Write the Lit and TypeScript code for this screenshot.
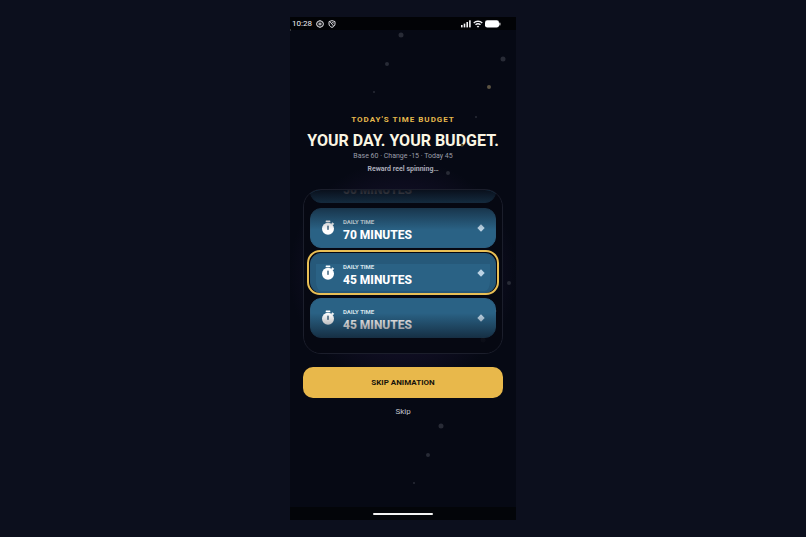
import { LitElement, html, css } from "lit";
import { customElement, property, state } from "lit/decorators.js";
import { styleMap } from "lit/directives/style-map.js";
import { classMap } from "lit/directives/class-map.js";

interface Particle {
  x: number;
  y: number;
  size: number;
  color: string;
}

const grey = "#282b36";
const faint = "#ffffff10";

/* Positions are percentages of the screen area. */
const particles: Particle[] = [
  { x: 0, y: 2.6, size: 2, color: "#4a4a4c" },
  { x: 49, y: 3.6, size: 5, color: grey },
  { x: 43, y: 9.3, size: 4, color: grey },
  { x: 37, y: 14.9, size: 2, color: grey },
  { x: 94.2, y: 8.3, size: 5, color: grey },
  { x: 88.1, y: 14, size: 4, color: "#5c5342" },
  { x: 82.1, y: 19.8, size: 2, color: grey },
  { x: 76, y: 25.4, size: 3, color: "#5c4a22" },
  { x: 70, y: 31.1, size: 4, color: grey },
  { x: 97.1, y: 52.9, size: 4, color: grey },
  { x: 91.2, y: 58.5, size: 2, color: faint },
  { x: 85.2, y: 64.2, size: 5, color: faint },
  { x: 67, y: 81.4, size: 5, color: grey },
  { x: 61, y: 87, size: 4, color: grey },
  { x: 55, y: 92.7, size: 2, color: grey },
];

@customElement("status-bar")
class StatusBar extends LitElement {
  static styles = css`
    :host {
      display: flex;
      align-items: center;
      justify-content: space-between;
      height: 13px;
      padding: 0 15px 0 2px;
      background: #020306;
      color: #f2f2f4;
      font-size: 8px;
      line-height: 13px;
    }
    .group {
      display: flex;
      align-items: center;
      gap: 4px;
    }
    .signals {
      gap: 2px;
    }
    svg {
      display: block;
    }
  `;

  render() {
    return html`
      <div class="group">
        <span>10:28</span>
        <svg width="8" height="8" viewBox="0 0 16 16" fill="none" stroke="#e4e4e8" stroke-width="2">
          <path d="M8 1.2 13.4 3.6 14.8 8 13.4 12.4 8 14.8 2.6 12.4 1.2 8 2.6 3.6Z" />
          <circle cx="8" cy="8" r="1.8" />
          <path d="M8 2v3M8 11v3M3 5l2.6 1.6M13 5l-2.6 1.6M3 11l2.6-1.6M13 11l-2.6-1.6" stroke-width="1" />
        </svg>
        <svg width="8" height="8" viewBox="0 0 16 16" fill="none" stroke="#e4e4e8" stroke-width="1.9">
          <path d="M8 1.2 14 3.2V8c0 3.4-2.6 5.6-6 6.8C4.6 13.6 2 11.4 2 8V3.2Z" />
          <path d="M4.500 4 11 12" />
          <path d="M8 5h2.500v2.500" stroke-width="1.400" />
        </svg>
      </div>
      <div class="group signals">
        <svg width="10" height="8" viewBox="0 0 10 8" fill="#f4f4f6">
          <rect x="0" y="5" width="1.6" height="2.4" />
          <rect x="2.7" y="3.6" width="1.6" height="3.8" />
          <rect x="5.4" y="2" width="1.6" height="5.4" />
          <rect x="8.1" y="0.3" width="1.6" height="7.1" />
        </svg>
        <svg width="10" height="8" viewBox="0 0 20 16" fill="none" stroke="#f4f4f6" stroke-width="2.8">
          <path d="M1.5 6a12.4 12.4 0 0 1 17 0" />
          <path d="M5 9.6a7.4 7.4 0 0 1 10 0" />
          <path d="M10 15.4 7.4 12.6a4 4 0 0 1 5.2 0Z" fill="#f4f4f6" stroke="none" />
        </svg>
        <svg width="16" height="8" viewBox="0 0 16 8" fill="#fff">
          <rect x="0" y="0.3" width="14" height="7.2" rx="2.3" />
          <rect x="14.3" y="2.5" width="1.1" height="3" rx="0.5" />
        </svg>
      </div>
    `;
  }
}

@customElement("reel-card")
class ReelCard extends LitElement {
  @property({ type: Number }) minutes = 0;

  static styles = css`
    :host {
      display: flex;
      align-items: center;
      gap: 8px;
      height: 40px;
      padding: 0 10px;
      box-sizing: border-box;
      border: 1px solid #2d5f80;
      border-radius: 11px;
      background: #2a6285;
      color: #fff;
    }
    .text {
      flex: 1;
      padding-top: 5px;
    }
    .label {
      font-size: 6px;
      font-weight: 700;
      line-height: 8px;
      color: #d5e2ea;
    }
    .value {
      font-size: 12px;
      font-weight: 800;
      line-height: 18px;
    }
    svg {
      display: block;
    }
  `;

  render() {
    return html`
      <svg width="14" height="16" viewBox="0 0 14 16">
        <rect x="4.7" y="0.6" width="4.6" height="1.7" rx="0.3" fill="#fff" />
        <circle cx="7" cy="8.700" r="6" fill="#fff" />
        <path d="m10.600 3.700 1-0.900 1.100 1.100-1 1Z" fill="#fff" stroke="#fff" stroke-width="0.800" />
        <rect x="6.3" y="5.500" width="1.4" height="4.400" rx="0.600" fill="#315a78" />
      </svg>
      <div class="text">
        <div class="label">DAILY TIME</div>
        <div class="value">${this.minutes} MINUTES</div>
      </div>
      <svg width="8" height="8" viewBox="0 0 8 8">
        <path d="M4 0.300 7.700 4 4 7.700 0.300 4Z" fill="#bcd3e4" />
      </svg>
    `;
  }
}

@customElement("app-root")
class AppRoot extends LitElement {
  @state() private reel = [50, 70, 45, 45];
  @state() private selected = 2;

  static styles = css`
    :host {
      display: flex;
      justify-content: center;
      box-sizing: border-box;
      min-height: 100vh;
      padding: 17px 0;
      background: #0c0f1d;
      font-family: Roboto, "Liberation Sans", sans-serif;
    }
    .phone {
      position: relative;
      display: flex;
      flex-direction: column;
      width: clamp(226px, 28vw, 420px);
      background: #060914;
      overflow: hidden;
    }
    .particle {
      position: absolute;
      border-radius: 50%;
      transform: translate(-50%, -50%);
      pointer-events: none;
    }
    main {
      flex: 1;
      display: flex;
      flex-direction: column;
      justify-content: center;
      padding: 0 13px;
      text-align: center;
      background: radial-gradient(circle 114px at 50% 51%, #120f26 0%, #120f26 60%, #060914 100%);
    }
    .eyebrow {
      margin: 0;
      font-size: 8px;
      font-weight: 700;
      line-height: 10px;
      letter-spacing: 1px;
      color: #e5b94d;
    }
    h1 {
      margin: 6px 0 0;
      font-size: 16px;
      font-weight: 700;
      line-height: 20px;
      color: #fbf6e3;
      white-space: nowrap;
    }
    .summary {
      margin: 0;
      font-size: 7px;
      line-height: 10px;
      color: #9a9da9;
    }
    .progress {
      margin: 3px 0 15px;
      font-size: 7px;
      font-weight: 700;
      line-height: 10px;
      color: #a9abb8;
    }
    .reel {
      position: relative;
      display: flex;
      flex-direction: column;
      justify-content: flex-end;
      gap: 5px;
      height: 165px;
      padding: 0 6px 15px;
      box-sizing: border-box;
      border: 1px solid #1b1e2b;
      border-radius: 18px;
      background: #060812;
      overflow: hidden;
      text-align: left;
    }
    .slot {
      position: relative;
    }
    .selected::before {
      content: "";
      position: absolute;
      z-index: 1;
      inset: 0;
      border-radius: 11px;
      border: 6px solid #22506f80;
      border-top-width: 11px;
      border-bottom-width: 2px;
      box-sizing: border-box;
    }
    .selected::after {
      content: "";
      position: absolute;
      z-index: 3;
      inset: -3px -3px -2px;
      border: 2px solid #e9bf55;
      border-radius: 13px;
    }
    .fade {
      position: absolute;
      z-index: 2;
      left: 0;
      right: 0;
      height: 40px;
      pointer-events: none;
    }
    .top {
      top: 0;
      background: linear-gradient(#060812e8, #06081200);
    }
    .bottom {
      bottom: 0;
      background: linear-gradient(#06081200, #060812e8);
    }
    button {
      border: 0;
      padding: 0;
      font-family: inherit;
      cursor: pointer;
    }
    .primary {
      height: 31px;
      margin-top: 13px;
      border-radius: 10px;
      background: #e8b84b;
      color: #17130c;
      font-size: 8px;
      font-weight: 700;
    }
    .quiet {
      align-self: center;
      height: 22px;
      margin-top: 2px;
      padding: 0 12px;
      background: none;
      color: #c3c5cf;
      font-size: 8px;
    }
    footer {
      display: flex;
      align-items: center;
      justify-content: center;
      height: 13px;
      background: #030509;
    }
    .handle {
      width: 60px;
      height: 2px;
      border-radius: 1px;
      background: #f4f4f4;
    }
  `;

  private skip() {
    this.selected = this.reel.length - 2;
  }

  render() {
    return html`
      <div class="phone">
        <status-bar></status-bar>
        <main>
          <p class="eyebrow">TODAY'S TIME BUDGET</p>
          <h1>YOUR DAY. YOUR BUDGET.</h1>
          <p class="summary">Base 60 · Change -15 · Today 45</p>
          <p class="progress" role="status">Reward reel spinning…</p>
          <div class="reel">
            ${this.reel.map(
              (minutes, i) => html`
                <div class=${classMap({ slot: true, selected: i === this.selected })}>
                  <reel-card .minutes=${minutes}></reel-card>
                </div>
              `
            )}
            <div class="fade top"></div>
            <div class="fade bottom"></div>
          </div>
          <button class="primary" @click=${this.skip}>SKIP ANIMATION</button>
          <button class="quiet" @click=${this.skip}>Skip</button>
        </main>
        <footer><div class="handle"></div></footer>
        ${particles.map(
          (p) => html`<i
            class="particle"
            style=${styleMap({
              left: `${p.x}%`,
              top: `${p.y}%`,
              width: `${p.size}px`,
              height: `${p.size}px`,
              background: p.color,
            })}
          ></i>`
        )}
      </div>
    `;
  }
}
